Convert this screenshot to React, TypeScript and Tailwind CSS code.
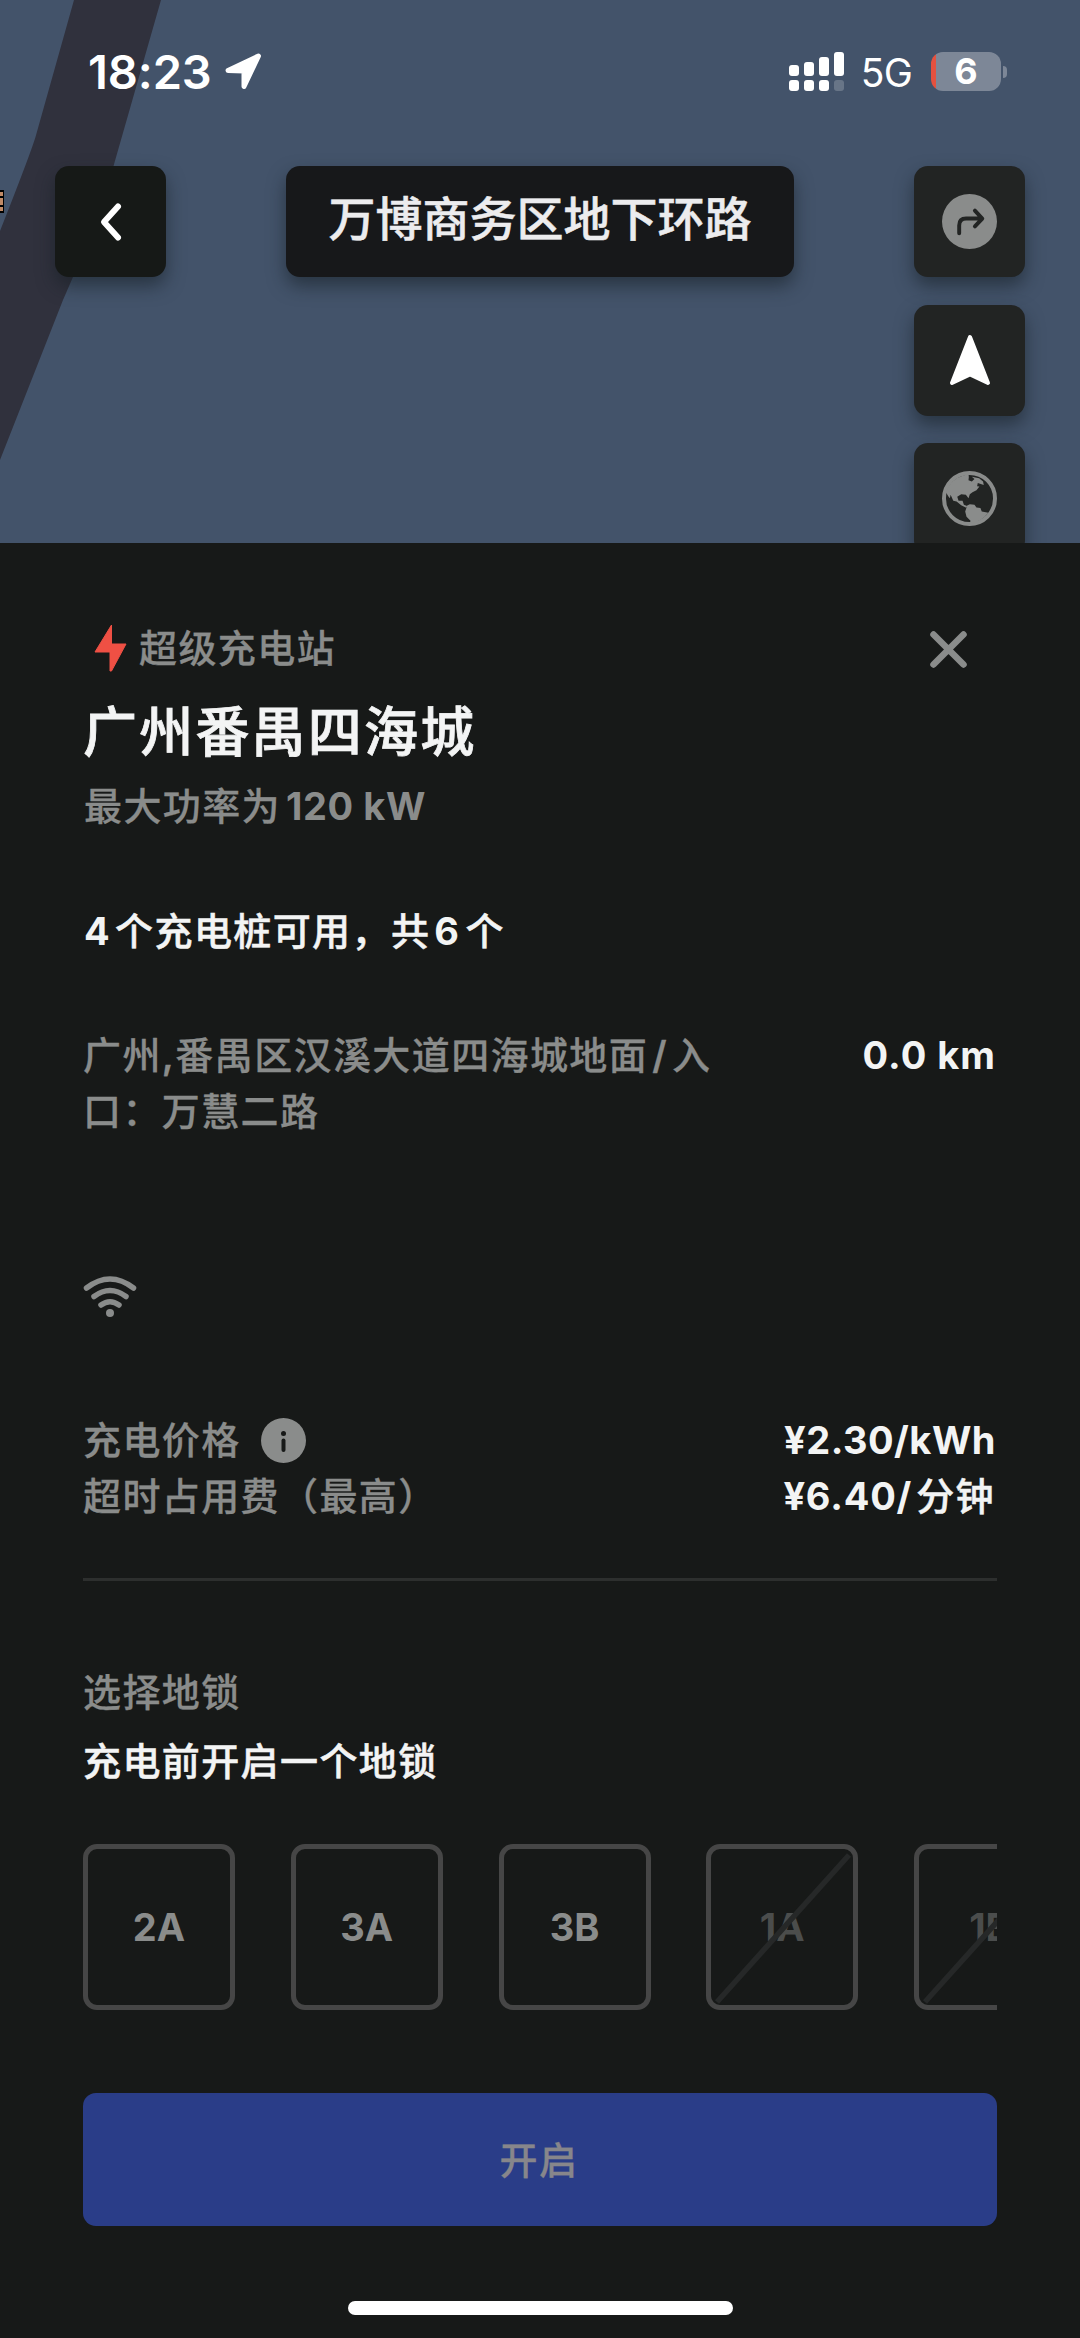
import type { ReactNode } from "react";
import clsx from "clsx";

const STALLS = [
  { id: "2A", available: true },
  { id: "3A", available: true },
  { id: "3B", available: true },
  { id: "1A", available: false },
  { id: "1B", available: false },
];

// each column is split: main line on top, second line below
const SIGNAL = [
  { top: "h-[11px]", bottom: "bg-white" },
  { top: "h-[14px]", bottom: "bg-white" },
  { top: "h-[19px]", bottom: "bg-white" },
  { top: "h-[24px]", bottom: "bg-white/20" },
];

function StatusBar() {
  return (
    <div className="flex h-[53px] items-center pr-[73px] pl-[88px] text-white">
      <span className="text-[47px] leading-[53px] font-semibold tracking-[-0.1px]">18:23</span>
      <svg className="ml-[13px] h-[37px] w-[37px]" viewBox="0 0 37 37" fill="currentColor">
        <path
          d="M3 17.5 33.5 3 19 33.5V18z"
          stroke="currentColor"
          strokeWidth="5"
          strokeLinejoin="round"
        />
      </svg>
      <div className="ml-auto flex items-end gap-[5.5px]">
        {SIGNAL.map((bar) => (
          <div key={bar.top} className="flex flex-col gap-1">
            <span className={clsx("w-[9.5px] rounded-[3px] bg-white", bar.top)} />
            <span className={clsx("h-[11px] w-[9.5px] rounded-[3px]", bar.bottom)} />
          </div>
        ))}
      </div>
      <span className="mt-[2px] ml-[17px] text-[39px] leading-[53px] tracking-[-0.8px]">5G</span>
      <div className="ml-[19px] flex items-center gap-[2px]">
        <div className="flex h-[39px] w-[70px] items-center justify-center rounded-[12px] bg-[linear-gradient(to_right,#e5513f_5px,#7d8797_5px)]">
          <span className="text-[36px] leading-[39px] font-bold">6</span>
        </div>
        <span className="h-[12px] w-[4px] rounded-r-full bg-[#7d8797]" />
      </div>
    </div>
  );
}

function MapButton({ className, children }: { className?: string; children: ReactNode }) {
  return (
    <button
      className={clsx(
        "flex h-[111px] w-[111px] shrink-0 items-center justify-center rounded-[14px] shadow-[0_9px_18px_rgba(20,30,35,0.55)]",
        className ?? "bg-[#222423]"
      )}
    >
      {children}
    </button>
  );
}

function RouteIcon() {
  return (
    <svg className="h-[55px] w-[55px]" viewBox="0 0 56 56" fill="none">
      <circle cx="28" cy="28" r="28" fill="#8a8c8b" />
      <path
        d="M17.500 40V32q0-7 7-7h15.500M33.500 17l7.500 8-7.500 8"
        stroke="#222423"
        strokeWidth="4"
        strokeLinecap="round"
        strokeLinejoin="round"
      />
    </svg>
  );
}

function GlobeIcon() {
  return (
    <svg className="h-[55px] w-[55px]" viewBox="0 0 166 166" fill="#8a8c8b">
      <circle cx="83" cy="83" r="77" fill="none" stroke="#8a8c8b" strokeWidth="12" />
      <path d="M12 65Q25 20 80 10L81 18 80 28 90 32 98 24 90 17 112 22 124 32 126 42 108 36 106 46 113 47 104 58 92 64 84 70 80 82 72 72 58 70 46 78 50 90 62 90 66 102 76 106 73 111 58 103 44 92 34 90 26 72 24 82 20 78z" />
      <path d="M76 104 84 100 98 102 104 110 116 112 120 122 140 126Q118 155 84 158L86 150 74 138 70 122z" />
    </svg>
  );
}

function Stall({ id, available }: { id: string; available: boolean }) {
  return (
    <div className="relative flex h-[166px] w-[152px] shrink-0 items-center justify-center rounded-[14px] border-[5.500px] border-[#464646]">
      <span className={clsx("text-[38px] font-bold", available ? "text-[#8a8c8b]" : "text-[#4b4d4c]")}>
        {id}
      </span>
      {!available && (
        <svg className="absolute inset-0 h-full w-full" viewBox="0 0 142 156" preserveAspectRatio="none">
          <path d="M6 153 138 6" stroke="#262828" strokeWidth="5.500" />
        </svg>
      )}
    </div>
  );
}

export default function App() {
  return (
    <div className="flex h-[2338px] w-[1080px] flex-col overflow-hidden bg-[#171918] font-['Inter','Noto_Sans_CJK_SC',sans-serif]">
      <section className="relative h-[543px] shrink-0 overflow-hidden bg-[#43536a]">
        <svg className="absolute inset-0 h-full w-full" viewBox="0 0 1080 543">
          <path d="M74 0 35.500 137Q30 155 0 231V460L63 300Q90 240 113.500 166L161 0z" fill="#30313d" />
        </svg>
        {/* road label running off the left edge */}
        <div className="absolute top-[190px] left-0 flex h-[23px] w-[4px] flex-col justify-between border-y-2 border-r-[1.500px] border-black bg-[#c08a66] py-1">
          <span className="h-[2px] bg-black" />
          <span className="h-[2px] bg-black" />
        </div>
        <div className="relative pt-[45px]">
          <StatusBar />
          <div className="mt-[68px] flex items-start justify-between px-[55px]">
            <MapButton className="bg-[#161917]">
              <svg className="h-[40px] w-[24px]" viewBox="0 0 24 40" fill="none">
                <path d="M19 4.500 5 20l14 15.500" stroke="#fff" strokeWidth="6" strokeLinecap="round" strokeLinejoin="round" />
              </svg>
            </MapButton>
            <div className="flex h-[111px] w-[508px] justify-center rounded-[14px] bg-[#17181a] shadow-[0_9px_18px_rgba(20,30,35,0.55)]">
              <h1 className="text-[47px] leading-[106px] font-medium text-[#ececee] [-webkit-text-stroke:0.5px]">
                万博商务区地下环路
              </h1>
            </div>
            <div className="flex flex-col gap-[27.500px]">
              <MapButton>
                <RouteIcon />
              </MapButton>
              <MapButton>
                <svg className="h-[52px] w-[42px]" viewBox="0 0 42 52" fill="#fff">
                  <path d="M21 3 39 49 21 40.500 3 49z" stroke="#fff" strokeWidth="4" strokeLinejoin="round" />
                </svg>
              </MapButton>
              <MapButton>
                <GlobeIcon />
              </MapButton>
            </div>
          </div>
        </div>
      </section>

      <main className="flex flex-col px-[83px] pt-[77px] text-[38px] leading-[56px] font-medium tracking-[1.4px] text-[#8a8c8b] [-webkit-text-stroke:0.3px]">
        <div className="flex h-[56px] items-center">
          <svg className="ml-[11px] h-[48px] w-[33px]" viewBox="0 0 33 48" fill="#ef5044">
            <path d="M17.500 1 1 28h15v19h1.500L32 20H17.500z" stroke="#ef5044" strokeLinejoin="round" />
          </svg>
          <span className="ml-[12px]">超级充电站</span>
          <svg className="mt-[3px] mr-[29px] ml-auto h-[39px] w-[39px]" viewBox="0 0 39 39" fill="none">
            <path d="M4.500 4.500l30 30M34.500 4.500l-30 30" stroke="#8a8c8b" strokeWidth="6.500" strokeLinecap="round" />
          </svg>
        </div>
        <h2 className="mt-[25px] text-[54px] leading-[64px] tracking-[2.2px] text-[#f3f4f4] [-webkit-text-stroke:0.8px]">
          广州番禺四海城
        </h2>
        <p className="mt-[13px] pl-px">
          最大功率为<span className="ml-[5px] font-bold tracking-[0.6px] [-webkit-text-stroke:0]">120 kW</span>
        </p>

        <p className="mt-[69px] pl-px text-[#f3f4f4] [-webkit-text-stroke:0.5px]">
          <span className="mr-[4px] font-bold [-webkit-text-stroke:0]">4</span>个充电桩可用，共
          <span className="mr-[5px] ml-[4px] font-bold [-webkit-text-stroke:0]">6</span>个
        </p>

        <div className="mt-[68px] flex justify-between">
          <p className="w-[640px]">
            广州<span className="font-semibold">,</span>番禺区汉溪大道四海城地面
            <span className="mx-[4px] font-semibold">/</span>入<br />
            口：万慧二路
          </p>
          <span className="pr-px font-bold tracking-[1px] text-[#f3f4f4] [-webkit-text-stroke:0]">0.0 km</span>
        </div>

        <svg className="mt-[137px] h-[41px] w-[54px]" viewBox="0 0 54 41" fill="none">
          <g stroke="#8a8c8b" strokeWidth="5.500" strokeLinecap="round">
            <path d="M3.500 12Q27-6 50.500 12" />
            <path d="M11 20.500Q27 8.500 43 20.500" />
            <path d="M18 29Q27 22.500 36 29" />
          </g>
          <circle cx="27" cy="37" r="4" fill="#8a8c8b" />
        </svg>

        <div className="mt-[95px] flex items-center justify-between">
          <div className="flex items-center">
            <span>充电价格</span>
            <svg className="ml-[20px] h-[45px] w-[45px]" viewBox="0 0 45 45">
              <circle cx="22.500" cy="22.500" r="22.500" fill="#8a8c8b" />
              <circle cx="22.500" cy="15.500" r="2.500" fill="#171918" />
              <path d="M22.500 22.500v9.500" stroke="#171918" strokeWidth="4" strokeLinecap="round" />
            </svg>
          </div>
          <span className="pr-px font-bold tracking-[0.5px] text-[#f3f4f4] [-webkit-text-stroke:0]">¥2.30/kWh</span>
        </div>
        <div className="flex items-center justify-between">
          <span>超时占用费（最高）</span>
          <span className="pr-[2px] text-[#f3f4f4] [-webkit-text-stroke:0.5px]">
            <span className="mr-[4px] font-bold tracking-[0.8px] [-webkit-text-stroke:0]">¥6.40/</span>分钟
          </span>
        </div>

        <hr className="mt-[54px] h-[3px] border-0 bg-[#2d2f2e]" />

        <p className="mt-[83px]">选择地锁</p>
        <p className="mt-[13px] text-[#f3f4f4] [-webkit-text-stroke:0.5px]">充电前开启一个地锁</p>

        <div className="mt-[55px] flex gap-[55.750px] overflow-hidden tracking-normal [-webkit-text-stroke:0]">
          {STALLS.map((stall) => (
            <Stall key={stall.id} {...stall} />
          ))}
        </div>

        <button className="mt-[83px] h-[133px] rounded-[13px] bg-[#2a3d88] pr-[2px] text-[#87868b]">开启</button>
      </main>

      <div className="mx-auto mt-[75px] h-[14px] w-[385px] shrink-0 rounded-full bg-white" />
    </div>
  );
}
